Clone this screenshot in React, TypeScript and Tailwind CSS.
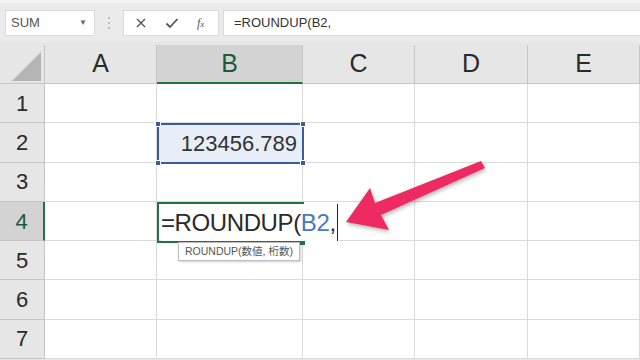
import React from 'react';

const cols = ['A', 'B', 'C', 'D', 'E'];
const colWidths = [112, 146, 112, 113, 112];
const rows = [1, 2, 3, 4, 5, 6, 7];

const font = { fontFamily: '"Liberation Sans", "Noto Sans CJK JP", sans-serif' };

const Handle: React.FC<{ className: string }> = ({ className }) => (
  <div className={`absolute w-[6px] h-[6px] bg-[#3a5da0] border border-white ${className}`} />
);

const App: React.FC = () => {
  return (
    <div className="w-[640px] h-[360px] overflow-hidden bg-[#e6e6e6] text-[#2a2a2a]" style={font}>
      {/* formula bar */}
      <div className="h-[42px] bg-[#ebebeb] border-t-[3px] border-[#f4f4f4] flex items-center pl-[5px] gap-0">
        <div className="w-[90px] h-[26px] bg-white border border-[#dadada] flex items-center justify-between px-[5px] text-[13px] text-[#555]">
          <span>SUM</span>
          <span className="text-[8px] text-[#666] mr-[2px]">▼</span>
        </div>
        <div className="w-[28px] flex justify-center">
          <div className="flex flex-col gap-[3px]">
            <span className="w-[2px] h-[2px] bg-[#bbb]" />
            <span className="w-[2px] h-[2px] bg-[#bbb]" />
            <span className="w-[2px] h-[2px] bg-[#bbb]" />
          </div>
        </div>
        <div className="w-[96px] h-[26px] bg-white border border-[#dadada] flex items-center text-[#555]">
          <svg width="12" height="12" viewBox="0 0 12 12" className="ml-[11px]">
            <path d="M2 2 L10 10 M10 2 L2 10" stroke="#555" strokeWidth="1.4" fill="none" />
          </svg>
          <svg width="14" height="12" viewBox="0 0 14 12" className="ml-[18px]">
            <path d="M1.5 6.5 L5 10 L12.5 2" stroke="#555" strokeWidth="1.8" fill="none" />
          </svg>
          <span className="ml-[18px] text-[12px] italic text-[#555]" style={{ fontFamily: '"Liberation Serif", serif' }}>
            f<span className="text-[9px]">x</span>
          </span>
        </div>
        <div className="ml-[4px] flex-1 h-[26px] bg-white border border-[#dadada] border-r-0 flex items-center pl-[10px] text-[13px] text-[#333]">
          =ROUNDUP(B2,
        </div>
      </div>

      {/* sheet */}
      <div className="relative mt-[3px]">
        <div
          className="grid"
          style={{ gridTemplateColumns: `45px ${colWidths.map((w) => `${w}px`).join(' ')}`, gridTemplateRows: '39px repeat(7, 39.3px)' }}
        >
          {/* corner */}
          <div className="bg-[#e6e6e6] border-r border-b border-[#c6c6c6] relative">
            <svg width="45" height="39" className="absolute inset-0">
              <polygon points="12,36 41,36 41,7" fill="#b5b5b5" />
            </svg>
          </div>
          {cols.map((c) => (
            <div
              key={c}
              className={
                c === 'B'
                  ? 'bg-[#d3d3d3] border-b-2 border-b-[#217346] border-r border-r-[#c6c6c6] flex items-center justify-center text-[25px] text-[#1d5c3a]'
                  : 'bg-[#e6e6e6] border-b border-b-[#c6c6c6] border-r border-r-[#c6c6c6] flex items-center justify-center text-[25px] text-[#2a2a2a]'
              }
            >
              {c}
            </div>
          ))}
          {rows.map((r) => (
            <React.Fragment key={r}>
              <div
                className={
                  r === 4
                    ? 'bg-[#d3d3d3] border-r-2 border-r-[#217346] border-b border-b-[#c6c6c6] flex items-center justify-center text-[22px] text-[#1d5c3a]'
                    : 'bg-[#e6e6e6] border-r border-r-[#c6c6c6] border-b border-b-[#c6c6c6] flex items-center justify-center text-[22px] text-[#2a2a2a]'
                }
              >
                {r}
              </div>
              {cols.map((c) => (
                <div
                  key={c}
                  className={
                    r === 2 && c === 'B'
                      ? 'bg-[#e8eef8] border-r border-b border-[#dadada]'
                      : 'bg-white border-r border-b border-[#dadada]'
                  }
                />
              ))}
            </React.Fragment>
          ))}
        </div>

        {/* B2 selection */}
        <div className="absolute left-[157px] top-[78px] w-[147px] h-[41px] border-2 border-[#3a5da0] flex items-center justify-end pr-[5px] text-[22px] text-[#333]">
          123456.789
          <Handle className="-left-[4px] -top-[4px]" />
          <Handle className="-right-[4px] -top-[4px]" />
          <Handle className="-left-[4px] -bottom-[4px]" />
          <Handle className="-right-[4px] -bottom-[4px]" />
        </div>

        {/* B4 edit */}
        <div className="absolute left-[157px] top-[157px] w-[147px] h-[41px] border-2 border-[#217346]" />
        <div className="absolute left-[300px] top-[195px] w-[5px] h-[5px] bg-[#217346]" />
        <div className="absolute left-[161px] top-[159px] h-[37px] flex items-center whitespace-nowrap text-[24px] text-[#2a2a2a] bg-white pr-[1px]">
          <span className="tracking-[-0.4px]">=ROUNDUP(</span>
          <span className="text-[#4a78c0] tracking-[-0.3px]">B2</span>
          <span>,</span>
          <span className="ml-[1px] w-px h-[37px] bg-[#222]" />
        </div>

        {/* tooltip */}
        <div className="absolute left-[178px] top-[197px] h-[19px] px-[6px] bg-white border border-[#bdbdbd] shadow-[1px_1px_2px_rgba(0,0,0,0.2)] flex items-center text-[10.5px] text-[#555] whitespace-nowrap">
          ROUNDUP(数値, 桁数)
        </div>

        {/* arrow */}
        <svg width="640" height="315" className="absolute left-0 top-0 pointer-events-none">
          <defs>
            <filter id="sh" x="-20%" y="-20%" width="140%" height="140%">
              <feDropShadow dx="1" dy="2" stdDeviation="2" floodColor="#000" floodOpacity="0.3" />
            </filter>
          </defs>
          <g transform="translate(0,-45)">
            <polygon
              points="346,222 370,188 375,203 481,161 485,168 381,215 389,230"
              fill="#ee2a62"
              filter="url(#sh)"
            />
          </g>
        </svg>
      </div>
    </div>
  );
};

export default App;
